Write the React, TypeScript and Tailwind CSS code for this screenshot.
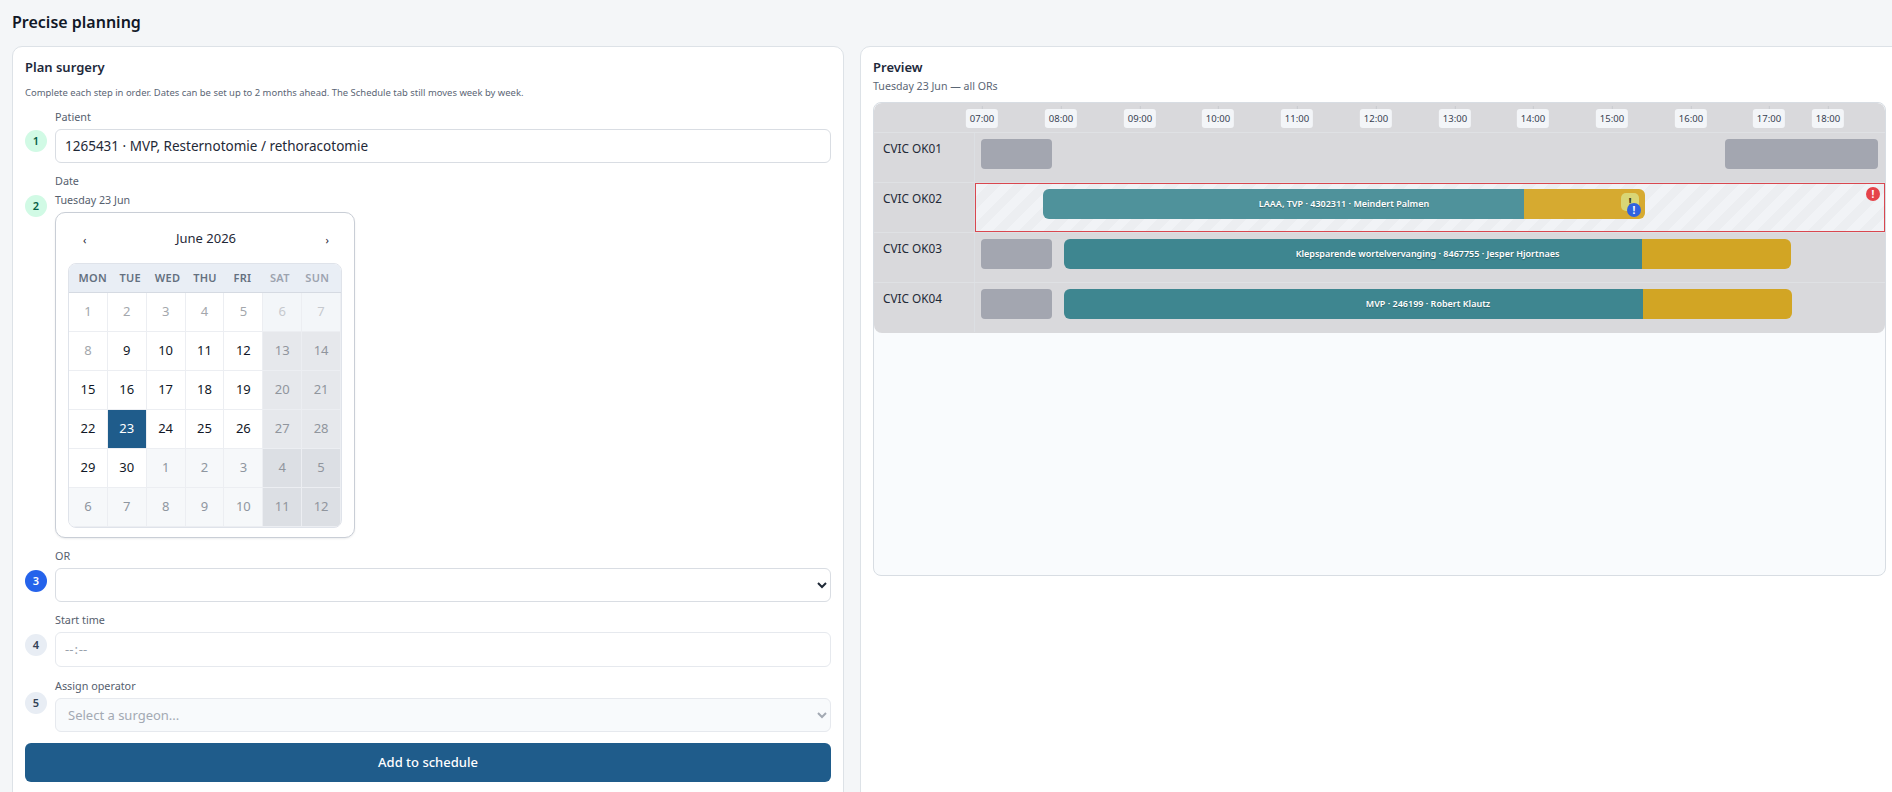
import { useState } from 'react';

const FONT = "font-['Noto_Sans','Open_Sans',sans-serif]";

const HOURS = [
  { label: '07:00', x: 7 },
  { label: '08:00', x: 86 },
  { label: '09:00', x: 165 },
  { label: '10:00', x: 243 },
  { label: '11:00', x: 322 },
  { label: '12:00', x: 401 },
  { label: '13:00', x: 480 },
  { label: '14:00', x: 558 },
  { label: '15:00', x: 637 },
  { label: '16:00', x: 716 },
  { label: '17:00', x: 794 },
  { label: '18:00', x: 853 },
];

type Bar = { left: number; teal: number; gold: number; text: string };

const ROOMS: { name: string; blocks: number[][]; bars: Bar[]; conflict?: boolean }[] = [
  { name: 'CVIC OK01', blocks: [[6, 71], [750, 153]], bars: [] },
  {
    name: 'CVIC OK02',
    blocks: [],
    conflict: true,
    bars: [{ left: 67, teal: 481, gold: 121, text: 'LAAA, TVP · 4302311 · Meindert Palmen' }],
  },
  {
    name: 'CVIC OK03',
    blocks: [[6, 71]],
    bars: [{ left: 89, teal: 578, gold: 149, text: 'Klepsparende wortelvervanging · 8467755 · Jesper Hjortnaes' }],
  },
  {
    name: 'CVIC OK04',
    blocks: [[6, 71]],
    bars: [{ left: 89, teal: 579, gold: 149, text: 'MVP · 246199 · Robert Klautz' }],
  },
];

const WEEKDAYS = ['MON', 'TUE', 'WED', 'THU', 'FRI', 'SAT', 'SUN'];

// day, kind: past / now / next
const CAL: [number, string][][] = [
  [[1, 'past'], [2, 'past'], [3, 'past'], [4, 'past'], [5, 'past'], [6, 'past'], [7, 'past']],
  [[8, 'past'], [9, 'now'], [10, 'now'], [11, 'now'], [12, 'now'], [13, 'now'], [14, 'now']],
  [[15, 'now'], [16, 'now'], [17, 'now'], [18, 'now'], [19, 'now'], [20, 'now'], [21, 'now']],
  [[22, 'now'], [23, 'now'], [24, 'now'], [25, 'now'], [26, 'now'], [27, 'now'], [28, 'now']],
  [[29, 'now'], [30, 'now'], [1, 'next'], [2, 'next'], [3, 'next'], [4, 'next'], [5, 'next']],
  [[6, 'next'], [7, 'next'], [8, 'next'], [9, 'next'], [10, 'next'], [11, 'next'], [12, 'next']],
];

function cellClass(kind: string, weekend: boolean, selected: boolean) {
  if (selected) return 'bg-[#1f5c8b] text-white font-[450]';
  if (kind === 'past') return weekend ? 'bg-[#f3f6f9] text-[#c6c9ce]' : 'bg-white text-[#a3a7ac]';
  if (kind === 'next') return weekend ? 'bg-[#dcdfe4] text-[#90959d]' : 'bg-[#f6f8fa] text-[#8f96a0]';
  return weekend ? 'bg-[#e6e8ec] text-[#90959d] font-[450]' : 'bg-white text-[#111827] font-[450]';
}

function StepDot({ n, tone }: { n: number; tone: 'done' | 'active' | 'todo' }) {
  const toneClass =
    tone === 'done'
      ? 'bg-[#d1fae5] text-[#065f46]'
      : tone === 'active'
        ? 'bg-[#2563eb] text-white'
        : 'bg-[#e8edf4] text-[#334155]';
  return (
    <div className={`w-[22px] h-[22px] shrink-0 rounded-full flex items-center justify-center text-[11px] font-semibold ${toneClass}`}>
      {n}
    </div>
  );
}

function Calendar() {
  return (
    <div className="w-[300px] h-[326px] rounded-[10px] border border-[#c9ced6] bg-white px-3 pt-[16px] shadow-[0_1px_2px_rgba(15,23,42,0.08)]">
      <div className="flex items-center justify-between h-[20px] mb-[14px] pl-[15px] pr-[13px] text-[#1f2937]">
        <span className="text-[11px] leading-none">‹</span>
        <span className="text-[13px] font-[450]">June 2026</span>
        <span className="text-[11px] leading-none">›</span>
      </div>
      <div className="rounded-[8px] border border-[#dfe3ea] overflow-hidden">
        <div className="grid grid-cols-7 h-[29px] px-[5px] bg-[#e9eef5] border-b border-[#d5dae2]">
          {WEEKDAYS.map((d, i) => (
            <div
              key={d}
              className={`flex items-center justify-center text-[11px] font-semibold tracking-[0.3px] ${i > 4 ? 'text-[#9ca3af]' : 'text-[#64707f]'}`}
            >
              {d}
            </div>
          ))}
        </div>
        {CAL.map((week, w) => (
          <div key={w} className="grid grid-cols-7 h-[39px]">
            {week.map(([day, kind], i) => (
              <div
                key={i}
                className={`flex items-center justify-center text-[13px] border-r border-b border-[#eceef2] ${cellClass(kind, i > 4, day === 23 && kind === 'now')}`}
              >
                {day}
              </div>
            ))}
          </div>
        ))}
      </div>
    </div>
  );
}

function PlanCard() {
  const [patient, setPatient] = useState('1265431 · MVP, Resternotomie / rethoracotomie');
  return (
    <div className="w-[832px] shrink-0 h-[760px] rounded-t-[10px] border border-[#dde2e7] bg-white px-3 pt-[10px]">
      <h2 className="text-[13px] leading-[20px] font-semibold text-[#1e293b]">Plan surgery</h2>
      <p className="mt-[9px] text-[9.45px] leading-[14px] text-[#5b6675]">
        Complete each step in order. Dates can be set up to 2 months ahead. The Schedule tab still moves week by week.
      </p>

      <div className="mt-[9px] flex gap-2 items-start">
        <div className="pt-[21px]">
          <StepDot n={1} tone="done" />
        </div>
        <div className="flex-1">
          <div className="text-[10.8px] leading-[16px] text-[#56606e] mb-[4px]">Patient</div>
          <input
            value={patient}
            onChange={e => setPatient(e.target.value)}
            className="w-full h-[34px] rounded-[6px] border border-[#d9dde3] bg-white px-[9px] text-[13.5px] text-[#1f2937] outline-none"
          />
        </div>
      </div>

      <div className="mt-[10px] flex gap-2 items-start">
        <div className="pt-[22px]">
          <StepDot n={2} tone="done" />
        </div>
        <div>
          <div className="text-[10.8px] leading-[16px] text-[#56606e]">Date</div>
          <div className="mt-[3px] text-[10.7px] leading-[16px] text-[#56606e] mb-[4px]">Tuesday 23 Jun</div>
          <Calendar />
        </div>
      </div>

      <div className="mt-[10px] flex gap-2 items-start">
        <div className="pt-[22px]">
          <StepDot n={3} tone="active" />
        </div>
        <div className="flex-1">
          <div className="text-[10.8px] leading-[16px] text-[#56606e] mb-[4px]">OR</div>
          <select className="w-full h-[34px] rounded-[6px] border border-[#d9dde3] bg-white px-2 text-[13px] text-[#1f2937] outline-none">
            <option value=""></option>
          </select>
        </div>
      </div>

      <div className="mt-[10px] flex gap-2 items-start">
        <div className="pt-[22px]">
          <StepDot n={4} tone="todo" />
        </div>
        <div className="flex-1">
          <div className="text-[10.8px] leading-[16px] text-[#56606e] mb-[4px]">Start time</div>
          <input
            type="time"
            disabled
            className="w-full h-[35px] rounded-[6px] border border-[#e6e9ee] bg-white px-2 text-[13px] text-[#9aa1ab] outline-none [&::-webkit-datetime-edit-ampm-field]:hidden [&::-webkit-calendar-picker-indicator]:hidden"
          />
        </div>
      </div>

      <div className="mt-[11px] flex gap-2 items-start">
        <div className="pt-[14px]">
          <StepDot n={5} tone="todo" />
        </div>
        <div className="flex-1">
          <div className="text-[10.8px] leading-[16px] text-[#56606e] mb-[4px]">Assign operator</div>
          <select
            disabled
            className="w-full h-[34px] rounded-[6px] border border-[#e6e9ee] bg-[#f8fafc] px-2 text-[13px] text-[#a3a9b3] outline-none"
          >
            <option>Select a surgeon...</option>
          </select>
        </div>
      </div>

      <button className="mt-[11px] w-full h-[39px] rounded-[6px] bg-[#1f5c8b] text-[13px] font-medium text-white">
        Add to schedule
      </button>
    </div>
  );
}

function Alert({ className }: { className: string }) {
  return (
    <div className={`absolute w-[14px] h-[14px] rounded-full flex items-center justify-center text-[10px] font-bold leading-none text-white ${className}`}>
      !
    </div>
  );
}

function RoomRow({ room }: { room: (typeof ROOMS)[number] }) {
  return (
    <div className="flex h-[50px] border-t border-[#dfe1e4]">
      <div className="w-[101px] shrink-0 pl-[9px] pt-[5px] text-[11.8px] leading-[20px] font-[450] text-[#1f2937] border-r border-[#dcdfe3]">
        {room.name}
      </div>
      <div
        className={`relative flex-1 ${room.conflict ? 'border border-[#d9474f] bg-[repeating-linear-gradient(135deg,#f1f3f6_0,#f1f3f6_9px,#eceef1_9px,#eceef1_18px)]' : ''}`}
      >
        {room.blocks.map(([left, width]) => (
          <div
            key={left}
            className="absolute top-[6px] h-[30px] rounded-[4px] bg-[#a3a6b0]"
            style={{ left, width }}
          />
        ))}
        {room.bars.map(bar => (
          <div
            key={bar.left}
            className={`absolute h-[30px] flex ${room.conflict ? 'top-[5px]' : 'top-[6px]'}`}
            style={{ left: bar.left, width: bar.teal + bar.gold }}
          >
            <div
              className={`h-full rounded-l-[6px] ${room.conflict ? 'bg-[#4f929b]' : 'bg-[#3e8690]'}`}
              style={{ width: bar.teal }}
            />
            <div
              className={`h-full rounded-r-[6px] ${room.conflict ? 'bg-[#d6aa30]' : 'bg-[#d2a524]'}`}
              style={{ width: bar.gold }}
            />
            <div className="absolute inset-0 flex items-center justify-center text-[9px] font-semibold text-white [text-shadow:0_1px_1px_rgba(0,0,0,0.3)]">
              {bar.text}
            </div>
            {room.conflict && (
              <>
                <div className="absolute left-[578px] top-[4px] w-[18px] h-[18px] rounded-[5px] bg-[#d9d676] flex justify-center text-[11px] font-bold leading-[18px] text-[#3f3f1f]">
                  !
                </div>
                <Alert className="left-[584px] top-[14px] bg-[#2f62e0]" />
              </>
            )}
          </div>
        ))}
        {room.conflict && <Alert className="right-[4px] top-[3px] bg-[#e5434a]" />}
      </div>
    </div>
  );
}

function PreviewCard() {
  return (
    <div className="w-[1060px] shrink-0 h-[760px] rounded-t-[10px] border border-[#dde2e7] bg-white pl-3 pt-[10px]">
      <h2 className="text-[13px] leading-[20px] font-semibold text-[#1e293b]">Preview</h2>
      <p className="mt-[1px] text-[10.6px] leading-[16px] text-[#5b6675]">Tuesday 23 Jun — all ORs</p>
      <div className="mt-[8px] w-[1013px] h-[474px] rounded-[8px] border border-[#d8dde3] bg-[#f9fbfd] overflow-hidden">
        <div className="bg-[#d9d9dc] rounded-[8px] pb-px">
          <div className="relative h-[29px]">
            {HOURS.map(h => (
              <div key={h.label} className="absolute top-[3px] -translate-x-1/2 flex flex-col items-center" style={{ left: 101 + h.x }}>
                <div className="w-px h-[3px] bg-[#c8cbd0]" />
                <div className="h-[19px] px-[4px] rounded-[3px] bg-[#f3f5f8] text-[9.5px] leading-[19px] text-[#374151]">
                  {h.label}
                </div>
              </div>
            ))}
          </div>
          {ROOMS.map(room => (
            <RoomRow key={room.name} room={room} />
          ))}
        </div>
      </div>
    </div>
  );
}

export default function App() {
  return (
    <div className={`w-[1892px] h-[792px] overflow-hidden bg-[#f4f6f8] pl-3 ${FONT}`}>
      <h1 className="h-[46px] pt-[10px] text-[16px] leading-[24px] font-semibold text-[#111827]">Precise planning</h1>
      <div className="flex gap-[16px]">
        <PlanCard />
        <PreviewCard />
      </div>
    </div>
  );
}
